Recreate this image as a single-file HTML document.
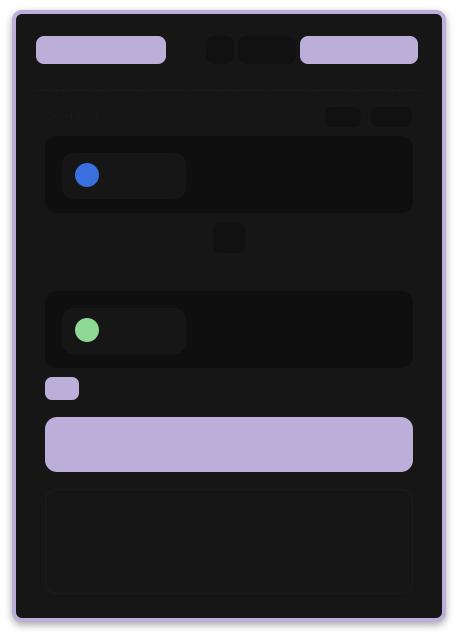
<!DOCTYPE html>
<html><head><style>
body{margin:0;width:458px;height:635px;background:#fff;position:relative;overflow:hidden;font-family:"Liberation Sans",sans-serif}
.a{position:absolute}
.lav{background:#bbafd9}
</style></head><body>
<div class="a" style="left:12px;top:10px;width:426px;height:604px;border:4px solid #bbafd9;border-radius:10px;background:#161616;box-shadow:0 3px 8px rgba(0,0,0,.35)"></div>
<div class="a lav" style="left:36px;top:36px;width:130px;height:28px;border-radius:8px"></div>
<div class="a" style="left:206px;top:36px;width:28px;height:28px;border-radius:8px;background:#111"></div>
<div class="a" style="left:238px;top:36px;width:58px;height:28px;border-radius:8px;background:#111"></div>
<div class="a lav" style="left:300px;top:36px;width:118px;height:28px;border-radius:8px"></div>
<div class="a" style="left:36px;top:90px;width:384px;border-top:1px dashed #1e1e1e"></div>
<div class="a" style="left:47px;top:110px;font-size:11px;color:#1b1b1b">Send from</div>
<div class="a" style="left:325px;top:107px;width:36px;height:20px;border-radius:7px;background:#111"></div>
<div class="a" style="left:371px;top:107px;width:41px;height:20px;border-radius:7px;background:#111"></div>
<div class="a" style="left:45px;top:136px;width:368px;height:77px;border-radius:12px;background:#0f0f0f"></div>
<div class="a" style="left:62px;top:153px;width:124px;height:46px;border-radius:12px;background:#161616"></div>
<div class="a" style="left:75px;top:163px;width:24px;height:24px;border-radius:50%;background:#3a6fe0"></div>
<div class="a" style="left:213px;top:222px;width:32px;height:31px;border-radius:8px;background:#111"></div>
<div class="a" style="left:45px;top:291px;width:368px;height:77px;border-radius:12px;background:#0f0f0f"></div>
<div class="a" style="left:62px;top:308px;width:124px;height:46px;border-radius:12px;background:#161616"></div>
<div class="a" style="left:75px;top:318px;width:24px;height:24px;border-radius:50%;background:#8ed895"></div>
<div class="a lav" style="left:45px;top:377px;width:34px;height:23px;border-radius:7px"></div>
<div class="a lav" style="left:45px;top:417px;width:368px;height:55px;border-radius:12px"></div>
<div class="a" style="left:45px;top:489px;width:366px;height:103px;border-radius:12px;border:1px solid #1d1d1d"></div>
</body></html>
